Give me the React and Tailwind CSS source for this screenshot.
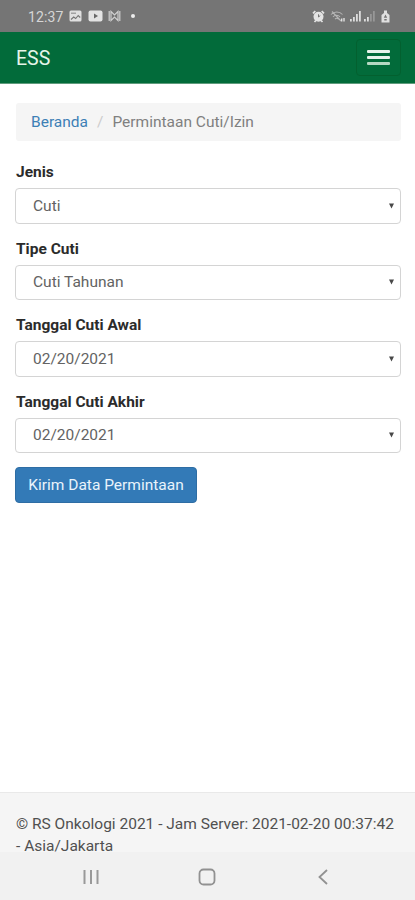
import React from 'react';

const fields = [
  { label: 'Jenis', value: 'Cuti' },
  { label: 'Tipe Cuti', value: 'Cuti Tahunan' },
  { label: 'Tanggal Cuti Awal', value: '02/20/2021' },
  { label: 'Tanggal Cuti Akhir', value: '02/20/2021' },
];

/* ── Android status bar ── */
function StatusBar() {
  return (
    <div className="h-8 flex items-center justify-between bg-[#757575] pl-[28px] pr-[25px] text-[#d6d6d6] flex-shrink-0">
      <div className="flex items-center">
        <span className="text-[14px] leading-none w-[41px] pt-px tracking-[0.15px] whitespace-nowrap">12:37</span>
        <svg className="w-[13px] h-[12px]" viewBox="0 0 13 12">
          <rect x="0.5" y="0.5" width="12" height="11" rx="1.5" fill="#e0e0e0" />
          <path d="M2 9.500 4.700 7l2 1.500L9.200 5.500l2 2" fill="none" stroke="#757575" strokeWidth="1.100" />
          <path d="M2 2.500h5v1.500H2z" fill="#a2a2a2" />
        </svg>
        <svg className="w-[15px] h-[12px] ml-[6px]" viewBox="0 0 15 12">
          <rect x="0.5" y="0.5" width="14" height="11" rx="2" fill="#e3e3e3" />
          <path d="M6 3.6 10 6 6 8.4z" fill="#686868" />
        </svg>
        <svg className="w-[13px] h-[12px] ml-[5px]" viewBox="0 0 13 12" fill="none" stroke="#cfcfcf">
          <path d="M1.200 1v10M11.800 1v10" strokeWidth="1.200" />
          <path d="M3 1.500 6.500 5 10 1.500v9L6.500 7 3 10.500z" strokeWidth="1.200" />
        </svg>
        <span className="w-1 h-1 rounded-full bg-[#ececec] ml-[10px]" />
      </div>
      <div className="flex items-center">
        <svg className="w-[13px] h-[13px]" viewBox="0 0 13 13">
          <path d="M1 3.300 3.300 1M12 3.300 9.700 1M2.500 12l1.400-1.500M10.500 12 9.100 10.500" stroke="#e3e3e3" strokeWidth="1.700" />
          <circle cx="6.500" cy="6.700" r="5" fill="#e3e3e3" />
          <path d="M6.500 4.300v2.700l1.800-1.500" fill="none" stroke="#757575" strokeWidth="1" />
        </svg>
        <svg className="w-[16px] h-[13px] ml-[5px]" viewBox="0 0 16 13" fill="none" stroke="#b5b5b5">
          <path d="M1 4.500C4 1.200 9.500 1.200 12.500 4.500M3 6.800c2-2 5-2 7 0M5 9c1-.9 2.500-.9 3.500 0M2 1.500 11 11" strokeWidth="1.100" />
          <path d="M11.700 11.500V8.500M14 8v3.500" stroke="#e0e0e0" strokeWidth="1.400" />
        </svg>
        <svg className="w-[12px] h-[12px] ml-[4px]" viewBox="0 0 12 12" fill="#dcdcdc">
          <path d="M0 9h1.800v2.500H0zM3 7h1.800v4.500H3zM6 4h1.800v7.500H6zM9 1h1.800v10.500H9z" />
        </svg>
        <svg className="w-[12px] h-[12px] ml-[2px]" viewBox="0 0 12 12" fill="#dcdcdc">
          <path d="M0 9h1.800v2.500H0zM3 7h1.800v4.500H3z" />
          <path d="M6 4h1.800v7.500H6zM9 1h1.800v10.500H9z" fill="#979797" />
        </svg>
        <svg className="w-[9px] h-[13px] ml-[5px]" viewBox="0 0 9 13">
          <path d="M3 .5h3V3l2.500 2v7.500H.5V5L3 3z" fill="#e0e0e0" />
          <path d="M4.500 4.500 2.800 7.800h3.400zM3.300 9h2.400v1.500H3.300z" fill="#757575" />
        </svg>
      </div>
    </div>
  );
}

function Navbar() {
  return (
    <header className="h-[52px] flex items-center justify-between bg-[#026b3a] border-b border-[#5f9b7c] pl-4 pr-[14px] flex-shrink-0">
      <span className="text-[19.5px] leading-none text-[#e5f5e9] pt-[2px]">ESS</span>
      <button className="w-[45px] h-[37px] rounded border border-[#03602f] flex flex-col items-center justify-center gap-[3px]">
        <span className="w-[23px] h-[3px] rounded-[1px] bg-[#e6f3ea]" />
        <span className="w-[23px] h-[3px] rounded-[1px] bg-[#e6f3ea]" />
        <span className="w-[23px] h-[3px] rounded-[1px] bg-[#b5d8c2]" />
      </button>
    </header>
  );
}

function SelectField({ label, value }) {
  return (
    <div className="h-[76.5px]">
      <label className="block h-[25px] text-[15.5px] leading-[19px] font-bold text-[#2b2b2b]">{label}</label>
      <div className="h-[35.500px] flex items-center justify-between -ml-px bg-white border border-[#d4d4d4] rounded-[4px] pl-[17px] pr-[6px]">
        <span className="text-[15.5px] leading-none pt-px text-[#636363]">{value}</span>
        <svg className="w-[5px] h-[6px]" viewBox="0 0 5 6">
          <path d="M0 .5h5L2.500 5.500z" fill="#484848" />
        </svg>
      </div>
    </div>
  );
}

export default function App() {
  return (
    <div className="w-full h-[900px] flex flex-col overflow-hidden bg-white font-['Roboto',sans-serif]">
      <StatusBar />
      <Navbar />

      <main className="flex-1 pl-4 pr-[14px] pt-[19px]">
        <nav className="h-[38px] flex items-center bg-[#f5f5f5] rounded-[3px] px-[15px] pt-px text-[15.5px] leading-none">
          <a className="text-[#3d80b5]">Beranda</a>
          <span className="text-[#cccccc] px-[9px]">/</span>
          <span className="text-[#808080]">Permintaan Cuti/Izin</span>
        </nav>

        <form className="pt-[22px]">
          {fields.map((field) => (
            <SelectField key={field.label} {...field} />
          ))}
          <button
            type="button"
            className="-ml-px -mt-[2px] w-[182px] h-[36px] pt-px bg-[#337ab7] border border-[#2e6da4] rounded-[4px] text-[15.5px] leading-none text-[#e9f3fb]"
          >
            Kirim Data Permintaan
          </button>
        </form>
      </main>

      <footer className="h-[60px] bg-[#f5f5f5] border-t border-[#e9e9e9] pl-4 pt-[21px] text-[15.5px] leading-[21.500px] text-[#505050] flex-shrink-0">
        <p className="whitespace-nowrap">© RS Onkologi 2021 - Jam Server: 2021-02-20 00:37:42</p>
        <p>- Asia/Jakarta</p>
      </footer>

      {/* Android navigation bar */}
      <div className="h-12 flex items-center bg-[#f1f1f1] pt-px flex-shrink-0">
        <svg className="w-[17px] h-[16px] ml-[83px]" viewBox="0 0 17 16" stroke="#999999" strokeWidth="2">
          <path d="M1.500 1v14M8 1v14M14.500 1v14" />
        </svg>
        <svg className="w-[18px] h-[18px] ml-[98px]" viewBox="0 0 18 18" fill="none" stroke="#919191" strokeWidth="1.800">
          <rect x="1.500" y="1.500" width="15" height="15" rx="4" />
        </svg>
        <svg className="w-[10px] h-[16px] ml-[102px]" viewBox="0 0 10 16" fill="none" stroke="#919191" strokeWidth="1.800">
          <path d="M9 1 1.500 8 9 15" />
        </svg>
      </div>
    </div>
  );
}
